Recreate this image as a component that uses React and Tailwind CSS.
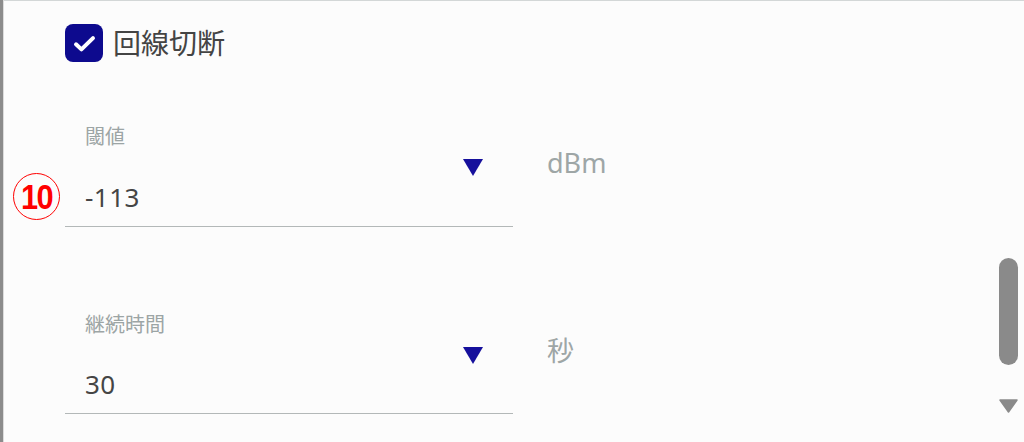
import React from 'react';

const font = { fontFamily: '"Noto Sans", "Noto Sans CJK JP", sans-serif' };

function Arrow() {
    return (
        <svg className="absolute right-[30px] w-[20px] h-[17px]" style={{ top: 33 }} viewBox="0 0 20 17">
            <path d="M0 0H20L10 17Z" fill="#16109c" />
        </svg>
    );
}

function Field({ label, value, unit, valueTop, bottom }) {
    return (
        <div className="flex items-start">
            <div className="relative w-[448px] flex flex-col border-b border-[#b3b8b8]" style={{ paddingBottom: bottom }}>
                <div className="pl-[20px] text-[20px] leading-[22px] text-[#9ca5a5]">{label}</div>
                <div className="pl-[20px] text-[26px] leading-[30px] tracking-[0.5px] text-[#454545]" style={{ marginTop: valueTop }}>{value}</div>
                <Arrow />
            </div>
            <div className="ml-[34px] mt-[22px] text-[27px] leading-[30px] text-[#9ea6a6]">{unit}</div>
        </div>
    );
}

export default function App() {
    return (
        <div className="w-[1024px] h-[442px] bg-[#fcfcfc] flex overflow-hidden" style={font}>
            <div className="w-[3px] bg-[#8c8c8c]" />
            <div className="w-px bg-[#dcdcdc]" />
            <div className="flex-1 flex border-t border-[#d3d7d7] relative">
                {/* annotation marker */}
                <div className="absolute left-[9px] top-[172px] w-[47px] h-[47px] rounded-full border-[1.5px] border-[#ff0000] flex items-center justify-center">
                    <span className="text-[35px] leading-none font-bold text-[#ff0000] tracking-[-2px] scale-x-[0.88]" style={{ fontFamily: '"Liberation Sans", sans-serif' }}>10</span>
                </div>

                <div className="flex-1 flex flex-col pl-[61px] pt-[23px]">
                    <div className="flex items-center gap-[10px]">
                        <div className="w-[38px] h-[38px] rounded-[8px] bg-[#0d0a8e] flex items-center justify-center">
                            <svg className="w-[37px] h-[37px]" viewBox="0 0 24 24" fill="none">
                                <path d="M6.5 12.5l3.5 3.3L17.5 8.5" stroke="#fff" strokeWidth="2.6" strokeLinecap="round" strokeLinejoin="round" />
                            </svg>
                        </div>
                        <span className="text-[28px] leading-[38px] text-[#444]">回線切断</span>
                    </div>

                    <div className="mt-[64px]">
                        <Field label="閾値" value="-113" unit="dBm" valueTop={34} bottom={14} />
                    </div>
                    <div className="mt-[87px]">
                        <Field label="継続時間" value="30" unit="秒" valueTop={33} bottom={14} />
                    </div>
                </div>

                <div className="w-[19px] mr-[6px] flex flex-col items-center pt-[257px]">
                    <div className="w-[19px] h-[107px] rounded-full bg-[#8a8a8a]" />
                    <svg className="mt-[34px] w-[19px] h-[14px]" viewBox="0 0 19 14">
                        <path d="M1 1H18L9.5 13Z" fill="#8a8a8a" strokeLinejoin="round" stroke="#8a8a8a" strokeWidth="1.5" />
                    </svg>
                </div>
            </div>
        </div>
    );
}
